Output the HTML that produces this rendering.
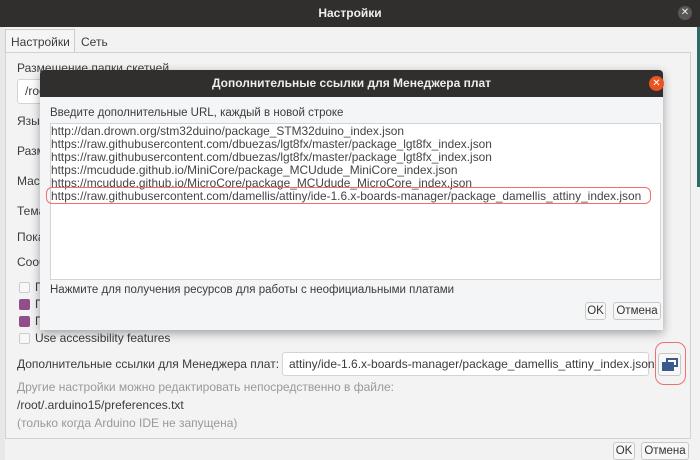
<!DOCTYPE html>
<html><head><meta charset="utf-8"><style>
*{box-sizing:border-box;margin:0;padding:0}
body{width:700px;height:460px;overflow:hidden;background:#f2f2f3;font-family:"Liberation Sans","DejaVu Sans",sans-serif;font-size:12px;color:#3c3c3c;position:relative}
.a{position:absolute;white-space:nowrap}
.tb{left:0;top:0;width:700px;height:27px;background:#302f2d;color:#eee;font-weight:bold;font-size:12px;text-align:center;line-height:27px}
.btn{position:absolute;border:1px solid #c8c8c8;border-radius:3px;background:#f7f7f7;font-size:11.5px;text-align:center;line-height:16px;color:#333}
.inp{position:absolute;border:1px solid #d4d4d4;border-radius:3px;background:#fff}
.cb{position:absolute;width:11px;height:11px;border:1px solid #ccc;border-radius:2px;background:#f7f7f7}
.cb.on{background:#924d8b;border-color:#924d8b}
.url{font-size:11.9px;line-height:13px;color:#444}
</style></head><body>
<div class="a tb">Настройки</div>
<div class="a" style="left:678px;top:6px;width:14px;height:14px;border-radius:7px;background:#585754;color:#eee;font-size:10px;line-height:14px;text-align:center">✕</div>
<div class="a" style="left:0;top:27px;width:5px;height:433px;background:#e8e8e8"></div>
<div class="a" style="left:697px;top:27px;width:3px;height:160px;background:#2e6b64"></div>
<div class="a" style="left:5px;top:29px;width:70px;height:24px;border:1px solid #ccc;border-bottom:none;background:#f5f5f6;line-height:24px;padding-left:5px">Настройки</div>
<div class="a" style="left:81px;top:35px">Сеть</div>
<div class="a" style="left:5px;top:52px;width:686px;height:387px;border:1px solid #d2d2d2;background:#f3f3f4"></div>
<div class="a" style="left:17px;top:61px">Размещение папки скетчей</div>
<div class="inp" style="left:17px;top:79px;width:40px;height:25px"></div>
<div class="a" style="left:25px;top:84px">/roo</div>
<div class="a" style="left:17px;top:114px">Язык</div>
<div class="a" style="left:17px;top:144px">Разм</div>
<div class="a" style="left:17px;top:174px">Масш</div>
<div class="a" style="left:17px;top:204px">Тема</div>
<div class="a" style="left:17px;top:230px">Пока</div>
<div class="a" style="left:17px;top:255px">Сооб</div>
<div class="cb" style="left:19px;top:282px"></div>
<div class="cb on" style="left:19px;top:299px"></div>
<div class="cb on" style="left:19px;top:316px"></div>
<div class="a" style="left:35px;top:280px">П</div>
<div class="a" style="left:35px;top:297px">П</div>
<div class="a" style="left:35px;top:314px">П</div>
<div class="cb" style="left:19px;top:333px"></div>
<div class="a" style="left:35px;top:331px">Use accessibility features</div>
<div class="a" style="left:17px;top:357px">Дополнительные ссылки для Менеджера плат:</div>
<div class="inp" style="left:282px;top:352px;width:367px;height:24px"></div>
<div class="a" style="left:289px;top:357px">attiny/ide-1.6.x-boards-manager/package_damellis_attiny_index.json</div>
<div class="a" style="left:655px;top:342px;width:31px;height:43px;border:1.5px solid #f07070;border-radius:9px"></div>
<div class="btn" style="left:658px;top:353px;width:23px;height:23px"></div>
<div class="a" style="left:666px;top:358px;width:12px;height:9px;border:2px solid #3a5a8c;background:#fff"></div>
<div class="a" style="left:662px;top:362px;width:12px;height:9px;background:#3a5a8c"></div>
<div class="a" style="left:17px;top:380px;color:#999">Другие настройки можно редактировать непосредственно в файле:</div>
<div class="a" style="left:17px;top:398px">/root/.arduino15/preferences.txt</div>
<div class="a" style="left:17px;top:416px;color:#999">(только когда Arduino IDE не запущена)</div>
<div class="btn" style="left:613px;top:442px;width:22px;height:18px">OK</div>
<div class="btn" style="left:641px;top:442px;width:48px;height:18px">Отмена</div>

<div class="a" style="left:40px;top:70px;width:623px;height:260px;background:#f4f5f7;box-shadow:0 3px 10px rgba(0,0,0,.35);border-radius:4px 4px 0 0"></div>
<div class="a" style="left:40px;top:70px;width:623px;height:27px;background:#302f2d;color:#eee;font-weight:bold;text-align:center;line-height:27px;border-radius:4px 4px 0 0">Дополнительные ссылки для Менеджера плат</div>
<div class="a" style="left:649px;top:76px;width:15px;height:15px;border-radius:8px;background:#e95420;color:#fff;font-size:10px;line-height:15px;text-align:center">✕</div>
<div class="a" style="left:50px;top:107px;font-size:11.5px">Введите дополнительные URL, каждый в новой строке</div>
<div class="a" style="left:50px;top:123px;width:611px;height:157px;border:1px solid #d4d4d4;background:#fff"></div>
<div class="a url" style="left:51px;top:125px">http://dan.drown.org/stm32duino/package_STM32duino_index.json<br>https://raw.githubusercontent.com/dbuezas/lgt8fx/master/package_lgt8fx_index.json<br>https://raw.githubusercontent.com/dbuezas/lgt8fx/master/package_lgt8fx_index.json<br>https://mcudude.github.io/MiniCore/package_MCUdude_MiniCore_index.json<br>https://mcudude.github.io/MicroCore/package_MCUdude_MicroCore_index.json<br>https://raw.githubusercontent.com/damellis/attiny/ide-1.6.x-boards-manager/package_damellis_attiny_index.json</div>
<div class="a" style="left:46px;top:187px;width:605px;height:17px;border:1.5px solid #f07070;border-radius:6px"></div>
<div class="a" style="left:50px;top:284px;font-size:11.5px">Нажмите для получения ресурсов для работы с неофициальными платами</div>
<div class="btn" style="left:585px;top:302px;width:21px;height:18px">OK</div>
<div class="btn" style="left:613px;top:302px;width:48px;height:18px">Отмена</div>
</body></html>
